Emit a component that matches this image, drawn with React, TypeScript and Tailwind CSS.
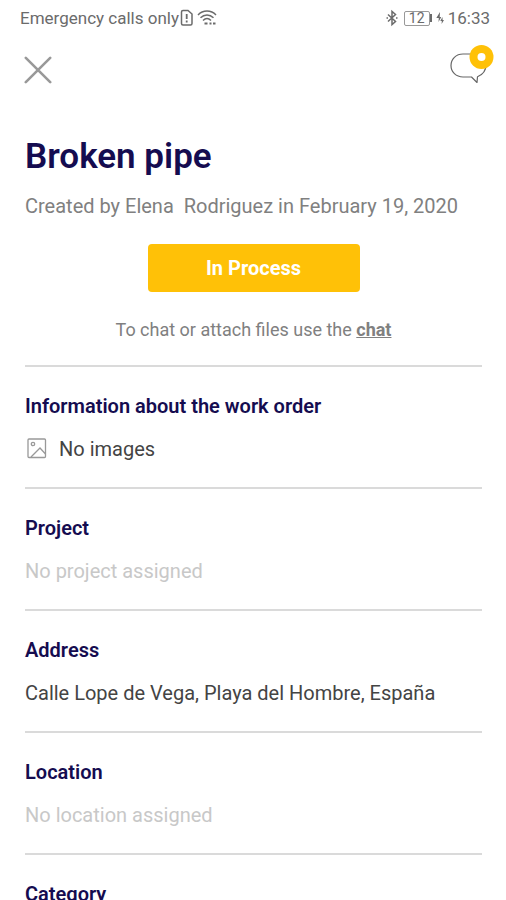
import React from 'react';

interface Detail {
  title: string;
  value?: string;
  empty?: boolean;
  icon?: boolean;
}

const details: Detail[] = [
  { title: 'Information about the work order', value: 'No images', icon: true },
  { title: 'Project', value: 'No project assigned', empty: true },
  { title: 'Address', value: 'Calle Lope de Vega, Playa del Hombre, España' },
  { title: 'Location', value: 'No location assigned', empty: true },
  { title: 'Category' },
];

const SimAlertIcon = () => (
  <svg width="14" height="18" viewBox="0 0 14 18" fill="none" stroke="currentColor" strokeWidth="1.5" aria-hidden="true">
    <path d="M4 1.5h5L13 5v9.5a1.5 1.5 0 0 1-1.5 1.5H4a1.5 1.5 0 0 1-1.5-1.5V3A1.5 1.5 0 0 1 4 1.5z" />
    <path d="M7.7 5v5M7.7 11.5v2" strokeWidth="1.8" />
  </svg>
);

const WifiIcon = () => (
  <svg width="20" height="18" viewBox="0 0 20 18" fill="none" stroke="currentColor" strokeWidth="1.5" aria-hidden="true">
    <path d="M1 6C6 .8 14 .8 19 6M3.5 8.8c3.8-3.800 9.200-3.800 13 0M6 11.500c2.400-2.300 5.600-2.300 8 0" />
    <path d="M7.5 14.5h3M12.5 14.5h2M16 14.5h2.500" strokeWidth="2.2" />
  </svg>
);

const BluetoothIcon = () => (
  <svg width="12" height="18" viewBox="0 0 12 18" fill="none" stroke="currentColor" strokeWidth="1.5" aria-hidden="true">
    <path d="M2 5.500l7.500 7L6 15.500v-13l3.500 3L2 12.500" />
    <path d="M.5 9h1.500M10 9h1.500" strokeWidth="1.600" />
  </svg>
);

const BoltIcon = () => (
  <svg width="8" height="14" viewBox="0 0 8 14" fill="currentColor" aria-hidden="true">
    <path d="M4 1L.3 7h2.500L2.500 11 5.300 6H3.700z" />
    <path d="M6.500 6L4.300 10h1.500l-.2 3L8 9H6.600z" />
  </svg>
);

const CloseIcon = () => (
  <svg width="28" height="28" viewBox="0 0 28 28" fill="none" stroke="currentColor" strokeWidth="2.6" strokeLinecap="round" aria-hidden="true">
    <path d="M1.8 1.8l24.4 24.4M26.2 1.8L1.8 26.2" />
  </svg>
);

const ChatIcon = () => (
  <svg width="44" height="40" viewBox="0 0 44 40" fill="none" aria-hidden="true">
    <path
      d="M13 10h11.5C31 10 36 14.8 36 20.5c0 6.5-4 10.5-8.5 12.2l-.5 5.800-5.500-5.500H13C6 33 1 28 1 21.500S6 10 13 10z"
      stroke="#666"
      strokeWidth="1.2"
      strokeLinejoin="round"
    />
    <circle cx="31.5" cy="13" r="12" fill="#ffc107" />
    <circle cx="31.5" cy="13" r="4" fill="#fff" />
  </svg>
);

const ImageIcon = () => (
  <svg width="20" height="22" viewBox="0 0 20 22" fill="none" stroke="#999" strokeWidth="1.3" aria-hidden="true">
    <rect x="1" y="1" width="17.5" height="18.5" rx="1" />
    <circle cx="6" cy="6" r="1.7" />
    <path d="M4 19l9-9 5.500 6" />
  </svg>
);

const StatusBar = () => (
  <div className="flex h-9 items-center justify-between pr-4 pl-5 text-[#6b6b6b]">
    <div className="flex items-center">
      <span className="text-[17px] leading-6">Emergency calls only</span>
      <SimAlertIcon />
      <span className="ml-1">
        <WifiIcon />
      </span>
    </div>
    <div className="flex items-center">
      <BluetoothIcon />
      <span className="ml-1.5 flex h-[15px] w-[26px] items-center justify-center rounded-xs border border-[#999] text-[14px] leading-none">
        12
      </span>
      <span className="h-2 w-0.5 bg-[#6b6b6b]" />
      <span className="ml-1">
        <BoltIcon />
      </span>
      <span className="ml-1 text-[17px] leading-6">16:33</span>
    </div>
  </div>
);

const DetailSection: React.FC<{ detail: Detail }> = ({ detail }) => (
  <section className="border-t-2 border-[#dadada] pt-[27px] pb-[26px]">
    <h2 className="text-[20px] leading-6 font-semibold text-[#150c50]">{detail.title}</h2>
    {detail.value && (
      <div className="mt-[19px] flex items-center">
        {detail.icon && (
          <span className="mr-3 ml-0.5">
            <ImageIcon />
          </span>
        )}
        <p className={`text-[20px] leading-6 ${detail.empty ? 'text-[#c8c8c8]' : 'text-[#444]'}`}>{detail.value}</p>
      </div>
    )}
  </section>
);

export default function App() {
  return (
    <div className="h-screen overflow-hidden bg-white font-['Roboto',sans-serif]">
      <StatusBar />

      {/* Top actions */}
      <header className="flex items-start justify-between pt-2 pr-3 pl-6">
        <button type="button" aria-label="Close" className="mt-3 text-[#999]">
          <CloseIcon />
        </button>
        <button type="button" aria-label="Open chat">
          <ChatIcon />
        </button>
      </header>

      <main className="pt-12 pr-6 pl-[25px]">
        <h1 className="text-[35px] leading-[50px] font-semibold text-[#150c50]">Broken pipe</h1>
        <p className="mt-3 text-[20px] leading-6 whitespace-pre text-[#808080]">
          {'Created by Elena  Rodriguez in February 19, 2020'}
        </p>

        <div className="mt-[26px] flex justify-center">
          <button type="button" className="h-12 w-[212px] rounded-sm bg-[#ffc107] text-[20px] font-bold text-white">
            In Process
          </button>
        </div>

        <p className="mt-[26px] mb-[23px] text-center text-[18px] leading-6 text-[#808080]">
          To chat or attach files use the{' '}
          <a href="#chat" className="font-bold underline">
            chat
          </a>
        </p>

        {details.map((detail) => (
          <DetailSection key={detail.title} detail={detail} />
        ))}
      </main>
    </div>
  );
}
